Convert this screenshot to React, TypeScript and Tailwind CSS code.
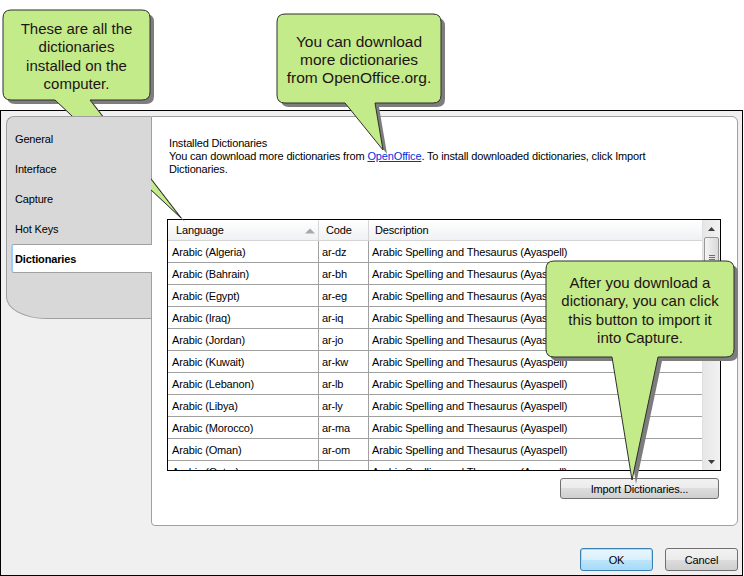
import React from "react";

const rows: [string, string][] = [
  ["Algeria", "dz"],
  ["Bahrain", "bh"],
  ["Egypt", "eg"],
  ["Iraq", "iq"],
  ["Jordan", "jo"],
  ["Kuwait", "kw"],
  ["Lebanon", "lb"],
  ["Libya", "ly"],
  ["Morocco", "ma"],
  ["Oman", "om"],
  ["Qatar", "qa"],
];

const tabs = ["General", "Interface", "Capture", "Hot Keys", "Dictionaries"];

function calloutPath(
  x1: number,
  y1: number,
  x2: number,
  y2: number,
  r: number,
  a: number,
  b: number,
  tx: number,
  ty: number
) {
  return `M ${x1 + r} ${y1} H ${x2 - r} Q ${x2} ${y1} ${x2} ${y1 + r} V ${y2 - r} Q ${x2} ${y2} ${x2 - r} ${y2} H ${b} L ${tx} ${ty} L ${a} ${y2} H ${x1 + r} Q ${x1} ${y2} ${x1} ${y2 - r} V ${y1 + r} Q ${x1} ${y1} ${x1 + r} ${y1} Z`;
}

const callouts = [
  calloutPath(3, 10, 150, 100, 8, 55, 90, 181, 218),
  calloutPath(277, 14, 441, 103, 8, 345, 375, 383, 150),
  calloutPath(546, 261, 734, 357, 8, 612, 658, 632, 480),
];

export default function App() {
  return (
    <div className="relative w-[744px] h-[576px] bg-white overflow-hidden font-['Liberation_Sans',Arial,sans-serif] text-[11px] text-black">
      <div className="pt-[110px] tracking-[-0.15px]">
        {/* Window */}
        <div className="w-[743px] h-[466px] border border-black bg-[#f0f0f0] flex flex-col">
          <div className="flex pt-[5px] pl-[5px] pr-[4px] h-[415px]">
            {/* Tab panel */}
            <div className="relative z-10 w-[145px] h-[203px] bg-[#d8d8d8] border-l border-t border-b border-[#a0a0a0] rounded-tl-[8px] rounded-bl-[40px_22px] pt-[7px] flex flex-col gap-[1px]">
              {tabs.map((t) => {
                const sel = t === "Dictionaries";
                return (
                  <div
                    key={t}
                    className={
                      sel
                        ? "ml-[4px] w-[141px] h-[29px] flex items-center pt-[1px] bg-white border-y border-[#a0a0a0] border-l-2 border-l-[#99ccff] rounded-l-[3px] pl-[2px] font-bold"
                        : "ml-[4px] w-[141px] h-[29px] flex items-center pt-[1px] border-y border-transparent border-l-2 border-l-transparent pl-[2px]"
                    }
                  >
                    {t}
                  </div>
                );
              })}
            </div>
            {/* Content panel */}
            <div className="flex-1 h-[410px] bg-white border border-[#a0a0a0] rounded-tr-[6px] rounded-br-[6px] rounded-bl-[4px] pt-[20px] pl-[15px] pr-[16px] flex flex-col">
              <div className="pl-[2px] leading-[13px]">
                Installed Dictionaries
                <br />
                You can download more dictionaries from{" "}
                <span className="text-[#0033dd] underline">OpenOffice</span>. To install downloaded dictionaries, click Import
                <br />
                Dictionaries.
              </div>
              {/* Table */}
              <div className="mt-[43px] h-[252px] border border-black flex">
                <div className="w-[534px] flex flex-col overflow-hidden">
                  <div className="h-[21px] shrink-0 flex bg-[linear-gradient(#ffffff,#f0f1f3)] border-b border-[#d5d5d5]">
                    <div className="relative w-[151px] border-r border-[#d5d5d5] pl-[8px] pt-[1px] flex items-center">
                      Language
                      <svg className="absolute left-[137px] top-[8px]" width="10" height="6" viewBox="0 0 10 6">
                        <path d="M0 5.5 L5 0.5 L10 5.5 Z" fill="#a8a8a8" />
                      </svg>
                    </div>
                    <div className="w-[50px] border-r border-[#d5d5d5] pl-[7px] pt-[1px] flex items-center">Code</div>
                    <div className="flex-1 pl-[6px] pt-[1px] flex items-center">Description</div>
                  </div>
                  {rows.map(([c, code]) => (
                    <div key={c} className="h-[22px] shrink-0 flex border-b border-[#a0a0a0]">
                      <div className="w-[151px] border-r border-[#a0a0a0] pl-[4px] pt-[1px] flex items-center">Arabic ({c})</div>
                      <div className="w-[50px] border-r border-[#a0a0a0] pl-[3px] pt-[1px] flex items-center">ar-{code}</div>
                      <div className="flex-1 pl-[3px] pt-[1px] flex items-center">Arabic Spelling and Thesaurus (Ayaspell)</div>
                    </div>
                  ))}
                </div>
                {/* Scrollbar */}
                <div className="flex-1 bg-[linear-gradient(90deg,#e6e6e6,#f2f2f2)] border-l border-[#e0e0e0] flex flex-col">
                  <div className="h-[17px] flex items-center justify-center">
                    <svg width="7" height="4" viewBox="0 0 7 4">
                      <path d="M0 4 L3.5 0 L7 4 Z" fill="#3c3c3c" />
                    </svg>
                  </div>
                  <div className="mx-[1px] h-[41px] rounded-[2px] border border-[#979797] bg-[linear-gradient(90deg,#f4f4f4,#d9d9d9)] flex flex-col items-center justify-center gap-[1px]">
                    <div className="w-[6px] h-[1px] bg-[#6f6f6f]" />
                    <div className="w-[6px] h-[1px] bg-[#6f6f6f]" />
                    <div className="w-[6px] h-[1px] bg-[#6f6f6f]" />
                  </div>
                  <div className="flex-1" />
                  <div className="h-[17px] flex items-center justify-center">
                    <svg width="7" height="4" viewBox="0 0 7 4">
                      <path d="M0 0 L3.5 4 L7 0 Z" fill="#3c3c3c" />
                    </svg>
                  </div>
                </div>
              </div>
              <div className="mt-[7px] self-end mr-[2px] w-[159px] h-[21px] rounded-[3px] border border-[#707070] bg-[linear-gradient(#f2f2f2_0%,#ebebeb_50%,#dddddd_50%,#cfcfcf_100%)] flex items-center justify-center pt-[1px]">
                Import Dictionaries...
              </div>
            </div>
          </div>
          {/* Buttons */}
          <div className="flex justify-end gap-[12px] pr-[4px] pt-[22px]">
            <div className="w-[73px] h-[23px] rounded-[3px] border border-[#3c7fb1] shadow-[inset_0_0_0_1px_#a8dcf7] bg-[linear-gradient(#eaf6fd_0%,#d9f0fc_50%,#bee6fd_50%,#a7d9f5_100%)] flex items-center justify-center pt-[1px]">
              OK
            </div>
            <div className="w-[73px] h-[23px] rounded-[3px] border border-[#707070] bg-[linear-gradient(#f2f2f2_0%,#ebebeb_50%,#dddddd_50%,#cfcfcf_100%)] flex items-center justify-center pt-[1px]">
              Cancel
            </div>
          </div>
        </div>
      </div>

      {/* Callouts overlay */}
      <svg className="absolute left-0 top-0 pointer-events-none" width="744" height="576" viewBox="0 0 744 576">
        {callouts.map((d, i) => (
          <g key={i}>
            <path d={d} transform="translate(4 4)" fill="#7d7d7d" />
            <path d={d} fill="#c4eb8a" stroke="#2e2e2e" strokeWidth="1" />
          </g>
        ))}
      </svg>
      <div className="absolute left-[3px] top-[20px] w-[147px] text-center text-[15px] leading-[18.3px] text-[#1e1414]">
        These are all the
        <br />
        dictionaries
        <br />
        installed on the
        <br />
        computer.
      </div>
      <div className="absolute left-[277px] top-[33px] w-[164px] text-center text-[15.5px] leading-[18px] text-[#1e1414]">
        You can download
        <br />
        more dictionaries
        <br />
        from OpenOffice.org.
      </div>
      <div className="absolute left-[546px] top-[274px] w-[188px] text-center text-[15px] leading-[18.3px] text-[#1e1414]">
        After you download a
        <br />
        dictionary, you can click
        <br />
        this button to import it
        <br />
        into Capture.
      </div>
    </div>
  );
}
